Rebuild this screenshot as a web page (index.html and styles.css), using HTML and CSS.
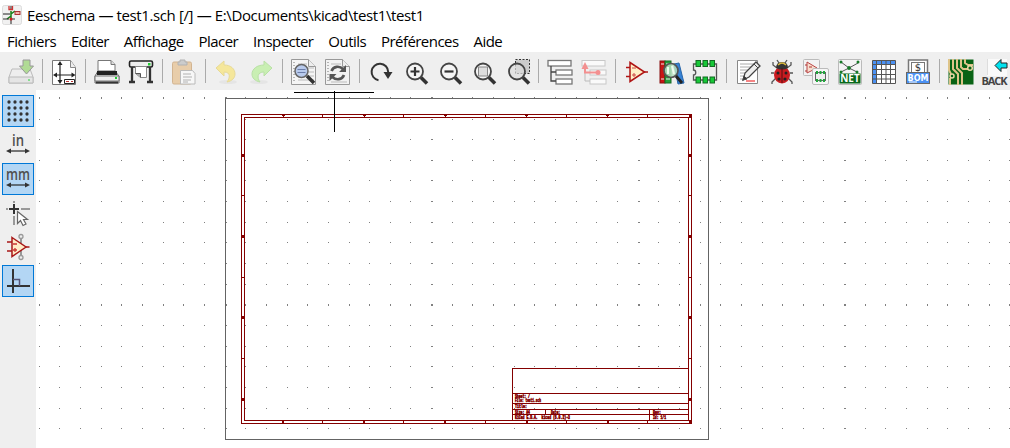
FILE: index.html
```html
<!DOCTYPE html>
<html lang="fr">
<head>
<meta charset="utf-8">
<title>Eeschema</title>
<link rel="stylesheet" href="styles.css">
</head>
<body>
<div class="app">
<header class="titlebar">
  <svg class="app-icon" viewBox="0 0 20 20"><rect x=".5" y=".5" width="19" height="19" rx="2" fill="#f1f1f1" stroke="#ddd"/><path d="M9 1v4M9 13v6M1 9h7" stroke="#222" fill="none"/><path d="M7 1v3.500h3.500V1" stroke="#c33" stroke-width="1.300" fill="none"/><path d="M9 6v7M9 9l4-3M9 11l-4 3" stroke="#167f16" stroke-width="1.500" fill="none"/><path d="M1 14h6M10 14h3" stroke="#333"/><rect x="13" y="6.500" width="5" height="3" fill="#f3b4ad" stroke="#a33"/><circle cx="9" cy="14" r="1.500" fill="#c22"/></svg>
  <span class="title">Eeschema — test1.sch [/] — E:\Documents\kicad\test1\test1</span>
</header>
<nav class="menubar"><span>Fichiers</span><span>Editer</span><span>Affichage</span><span>Placer</span><span>Inspecter</span><span>Outils</span><span>Préférences</span><span>Aide</span></nav>
<div class="toolbar">
  <div class="tool faded"><svg viewBox="0 0 26 26"><path d="M4 10h18l3 8v6H1v-6z" fill="#eee" stroke="#888"/><path d="M1 18h24v6H1z" fill="#ddd" stroke="#888"/><rect x="20" y="20" width="2" height="2" fill="#2c3"/><path d="M15 1h7v6h3.500l-7 8-7-8H15z" fill="#73c93c" stroke="#444"/></svg></div>
  <i class="sep"></i>
  <div class="tool"><svg viewBox="0 0 26 26"><path d="M1.500 1.500h18l5 7v17h-23z" fill="#fff" stroke="#777"/><path d="M19.500 1.500v7h5" fill="#eee" stroke="#888"/><path d="M9 4v19M4 16h18" stroke="#222" stroke-width="1.200"/><path d="M9 2l-2.500 4h5zM9 25l-2.500-4h5zM2 16l4-2.500v5zM24.500 16l-4-2.500v5z" fill="#222"/><path d="M13.500 20.500h10v4h-10z" fill="#fff" stroke="#222"/><path d="M15 22.500h3m2 0h2" stroke="#b33"/></svg></div>
  <i class="sep"></i>
  <div class="tool"><svg viewBox="0 0 26 26"><path d="M4 13V1.500h13l4 4V13" fill="#fff" stroke="#777"/><path d="M17 1.500v4h4" fill="#ddd" stroke="#777"/><path d="M4 12h17l4 5v7H1v-7z" fill="#ddd" stroke="#666"/><rect x="3" y="12" width="20" height="4" fill="#222"/><path d="M1 17h24v5H1z" fill="#eee" stroke="#777"/><path d="M2 23.500h22" stroke="#333" stroke-width="2"/><rect x="21" y="18" width="2" height="2" fill="#2c3"/></svg></div>
  <div class="tool"><svg viewBox="0 0 26 26"><rect x="1.500" y="2" width="23" height="6" rx="1.500" fill="#eee" stroke="#222" stroke-width="1.600"/><path d="M4 8v14m18-14v14M1 23h6m12 0h6" stroke="#333" stroke-width="2.300"/><path d="M7.500 7.500h11v11h-6l-5-4z" fill="#fff" stroke="#888"/><path d="M7.500 14.500h5v4" fill="#aaa" stroke="#555"/><rect x="20" y="4" width="2.500" height="2.500" fill="#2c3"/></svg></div>
  <i class="sep"></i>
  <div class="tool faded"><svg viewBox="0 0 26 26"><rect x="1.500" y="3" width="19" height="22" rx="1.500" fill="#e3ad68" stroke="#b77a35"/><path d="M7 6V3h2V1h5v2h2v3z" fill="#aaa" stroke="#777"/><path d="M9.500 11.500h12l2.500 3v10.500H9.500z" fill="#fff" stroke="#888"/><path d="M12 15h8m-8 3h9m-9 3h8m-8 2h5" stroke="#777"/></svg></div>
  <i class="sep"></i>
  <div class="tool faded"><svg viewBox="0 0 26 26"><ellipse cx="14" cy="23" rx="9" ry="2" fill="#ddd"/><path d="M2 9l8-7v4c7 0 11 4 11 9 0 4-3 7-8 8 3-4 4-10-3-10v4z" fill="#fbe04a" stroke="#e0c540"/></svg></div>
  <div class="tool faded"><svg viewBox="0 0 26 26"><ellipse cx="11" cy="23" rx="9" ry="2" fill="#ddd"/><path d="M24 9l-8-7v4c-7 0-12 4-12 9 0 4 3 7 8 8-3-4-3-10 4-10v4z" fill="#a4ef78" stroke="#84d35f"/></svg></div>
  <i class="sep"></i>
  <div class="tool"><svg viewBox="0 0 26 26"><path d="M.500 .500h17l7 7v18h-24z" fill="#f5f5f5" stroke="#999"/><path d="M17.500 .500v7h7" fill="#eee" stroke="#999"/><path d="M3 3v21" stroke="#777" stroke-dasharray="1 2"/><path d="M7 5h9M7 9h16M7 13h16M7 17h16M7 21h16" stroke="#bbb"/><circle cx="10.500" cy="12" r="6.500" fill="#b8caec" stroke="#666" stroke-width="1.500"/><path d="M6.500 10.500h8m-8 3h8" stroke="#6c7eaa"/><path d="M16 17l7 7" stroke="#333" stroke-width="3.500"/></svg></div>
  <div class="tool"><svg viewBox="0 0 26 26"><path d="M.500 .500h17l7 7v18h-24z" fill="#f2f2f2" stroke="#999"/><path d="M17.500 .500v7h7" fill="#eee" stroke="#999"/><path d="M3 3v21" stroke="#777" stroke-dasharray="1 2"/><path d="M6 5h10M6 23h16" stroke="#bbb"/><path d="M6.500 12c2-5 8-5.500 11.500-2M19 16c-2 5-8 5.500-11.500 2" fill="none" stroke="#555" stroke-width="2.700"/><path d="M21 6v7h-7zM4.500 22v-7h7z" fill="#555"/></svg></div>
  <i class="sep"></i>
  <div class="tool"><svg viewBox="0 0 26 26"><path d="M10.500 21.200A8.300 8.300 0 1 1 20.200 13" fill="none" stroke="#333" stroke-width="2"/><path d="M15.500 13h9l-4.500 7z" fill="#333"/></svg></div>
  <div class="tool"><svg viewBox="0 0 26 26"><circle cx="13" cy="12.500" r="8" fill="#f5f5f5" stroke="#444" stroke-width="1.800"/><path d="M13 8v9m-4.500-4.500h9" stroke="#333" stroke-width="2.200"/><path d="M19 18.500l6 6" stroke="#333" stroke-width="3.500"/></svg></div>
  <div class="tool"><svg viewBox="0 0 26 26"><circle cx="13" cy="12.500" r="8" fill="#f5f5f5" stroke="#444" stroke-width="1.800"/><path d="M8.500 12.500h9" stroke="#333" stroke-width="2.200"/><path d="M19 18.500l6 6" stroke="#333" stroke-width="3.500"/></svg></div>
  <div class="tool"><svg viewBox="0 0 26 26"><circle cx="13" cy="12.500" r="8" fill="#f5f5f5" stroke="#444" stroke-width="1.800"/><rect x="8.500" y="8" width="9" height="9" fill="#ddd" stroke="#888"/><path d="M19 18.500l6 6" stroke="#333" stroke-width="3.500"/></svg></div>
  <div class="tool"><svg viewBox="0 0 26 26"><rect x="11.500" y=".500" width="14" height="14" fill="#ccc" stroke="#333" stroke-dasharray="2 1.500"/><circle cx="13" cy="12.500" r="8" fill="#ddd" fill-opacity=".7" stroke="#444" stroke-width="1.800"/><path d="M19 18.500l6 6" stroke="#333" stroke-width="3.500"/></svg></div>
  <i class="sep"></i>
  <div class="tool"><svg viewBox="0 0 26 26"><g fill="#fff" stroke="#777" stroke-width="1.300"><rect x="1" y="1.500" width="23" height="5.500"/><rect x="9" y="11" width="16" height="5"/><rect x="9" y="20" width="16" height="5"/></g><path d="M4 7v15h5M4 13h5" fill="none" stroke="#444" stroke-width="1.300"/></svg></div>
  <div class="tool"><svg viewBox="0 0 26 26"><g fill="#fafafa" stroke="#c8c8c8"><rect x="1" y="1.500" width="23" height="5.500"/><rect x="9" y="11" width="16" height="5"/><rect x="9" y="20" width="16" height="5"/></g><path d="M4 13v9h5" fill="none" stroke="#bbb"/><path d="M4 8v5.500h13" fill="none" stroke="#f39090" stroke-width="2"/><path d="M.500 10L4 3l3.500 7z" fill="#f39090"/><circle cx="17" cy="13.500" r="2.500" fill="#f39090"/></svg></div>
  <i class="sep"></i>
  <div class="tool"><svg viewBox="0 0 26 26"><path d="M6 3.500l14.500 9.500L6 22.500z" fill="#fff0c7" stroke="#b01616" stroke-width="1.500"/><path d="M2 8.500h4M2 17.500h4M20 13h4" stroke="#b01616" stroke-width="1.700"/><path d="M8 9h4m-4 7h4m-2-2v4" stroke="#c44"/></svg></div>
  <div class="tool"><svg viewBox="0 0 26 26"><rect x="2" y="2" width="5" height="22" fill="#c91515" stroke="#811"/><rect x="7" y="2" width="6" height="22" fill="#24a03a" stroke="#176b24"/><path d="M16 5l5-1 5 20-6 1z" fill="#3683d7" stroke="#2765a8"/><path d="M3 5h3m2 0h4M3 20h3m2 0h4" stroke="#eee"/><circle cx="13" cy="11.500" r="7" fill="#b9e1c2" fill-opacity=".85" stroke="#555" stroke-width="1.700"/><path d="M10 8v7m4-8l2 8" stroke="#eefbee" stroke-width="2"/><path d="M18 17l6 7" stroke="#222" stroke-width="3"/></svg></div>
  <div class="tool"><svg viewBox="0 0 26 26"><path d="M1.500 5h23v16h-23v-5c3 0 3-5 0-5z" fill="#eee" stroke="#555" stroke-width="1.300"/><g fill="#17c837" stroke="#136b22"><rect x="4" y="1.500" width="4.500" height="6"/><rect x="11" y="1.500" width="4.500" height="6"/><rect x="18" y="1.500" width="4.500" height="6"/><rect x="4" y="18" width="4.500" height="6"/><rect x="11" y="18" width="4.500" height="6"/><rect x="18" y="18" width="4.500" height="6"/></g></svg></div>
  <i class="sep"></i>
  <div class="tool"><svg viewBox="0 0 26 26"><path d="M2.500 1.500h20v23h-20z" fill="#fff" stroke="#888"/><path d="M5 5h15M5 8h12M5 11h10M5 14h8M5 17h6M5 20h3" stroke="#aaa"/><path d="M11 22h9" stroke="#e33" stroke-width="1.200"/><path d="M8 21l2-7L21 3l4 4-11 11z" fill="#eee" stroke="#444" stroke-width="1.300"/><path d="M8 21l1-4 3 3zM19 5l4 4" fill="#333" stroke="#444"/></svg></div>
  <div class="tool"><svg viewBox="0 0 26 26"><path d="M8 9L4 6V3M18 9l4-3V3M5 14H2m19 0h3M7 19l-4 4v2M19 19l4 4v2M10 4L8 1m8 3l2-3" fill="none" stroke="#555" stroke-width="1.300"/><ellipse cx="13" cy="16" rx="8" ry="8.500" fill="#c91b20"/><path d="M7 9q0-6 6-6t6 6q-6 3-12 0z" fill="#333"/><path d="M9 6q4-4 8 0" fill="none" stroke="#d8b73d" stroke-width="1.500"/><path d="M13 9v15" stroke="#511"/><g fill="#222"><circle cx="9" cy="14" r="1.500"/><circle cx="17" cy="14" r="1.500"/><circle cx="10" cy="20" r="1.600"/><circle cx="16" cy="20" r="1.600"/></g></svg></div>
  <div class="tool"><svg viewBox="0 0 26 26"><rect x=".500" y=".500" width="16" height="16" rx="1" fill="#f3f3f3" stroke="#bbb"/><path d="M4 3l10 6-10 5z" fill="#f7ddcd" stroke="#b44"/><path d="M2 6h2m-2 6h2m2-4h3" stroke="#a33"/><rect x="9.500" y="9.500" width="16" height="16" rx="1.500" fill="#f6f6f6" stroke="#bbb"/><rect x="12.500" y="13.500" width="10" height="8" fill="#eee" stroke="#666"/><path d="M13 13.500h2m1.500 0h2m1.500 0h2M13 21.500h2m1.500 0h2m1.500 0h2" stroke="#21a83c" stroke-width="3"/></svg></div>
  <div class="tool"><svg viewBox="0 0 26 26"><rect x="1.500" y=".500" width="23" height="25" rx="1" fill="#f4f4f4" stroke="#bbb"/><path d="M4 3l8 6 9-5M4 13l8-4 8 4" stroke="#555" fill="none"/><g fill="#167a27"><circle cx="4" cy="3" r="1.500"/><circle cx="21" cy="3" r="1.500"/><circle cx="12" cy="9" r="1.900"/><circle cx="4" cy="13" r="1.500"/><circle cx="20" cy="13" r="1.500"/></g><rect x="2.500" y="14.500" width="21" height="10" fill="#09681b"/><text class="net" x="13" y="23" text-anchor="middle">NET</text></svg></div>
  <div class="tool"><svg viewBox="0 0 26 26"><path d="M1.500 1.500h23v23h-23z" fill="#fff"/><path d="M1.500 1.500h23v4h-19v19h-4z" fill="#4b91f3"/><path d="M1.500 1.500h23v23h-23zM5.500 1v24M10.500 1v24M15 1v24M19.500 1v24M1 5.500h24M1 10.500h24M1 15.500h24M1 20h24" fill="none" stroke="#555"/></svg></div>
  <div class="tool"><svg viewBox="0 0 26 26"><rect x="3.500" y="1" width="19" height="15" fill="#fff" stroke="#777" stroke-width="1.500"/><rect x="6.500" y="3.500" width="13" height="10" fill="#fff" stroke="#777"/><text class="dollar" x="13" y="12" text-anchor="middle">$</text><rect x="1.500" y="13.500" width="23" height="11" fill="#4b91f3" stroke="#666"/><text class="bom" x="13" y="21.500" text-anchor="middle">BOM</text><path d="M4 23h8" stroke="#fff"/></svg></div>
  <i class="sep"></i>
  <div class="tool"><svg viewBox="0 0 26 26"><path d="M.500.500h25v25H.500z" fill="#096315"/><path d="M1 0v11l2 4M5 0v10l5 5v11M9 0v9l5 5v12M13 0v8l2 2h5M17 0v4l3 2h5M2 26v-7" fill="none" stroke="#dec489" stroke-width="2"/><circle cx="22" cy="9" r="2.300" fill="#096315" stroke="#ead7a5" stroke-width="1.500"/><circle cx="4" cy="17" r="2" fill="#096315" stroke="#ead7a5" stroke-width="1.500"/></svg></div>
  <div class="tool"><svg viewBox="0 0 26 26"><path d="M5 0h20v17H5z" fill="#fafafa"/><path d="M5.500 0v16" stroke="#ddd"/><path d="M13 6.500l6-6v3.500h6v5h-6v3.500z" fill="#00e1ee" stroke="#222"/><text class="back" x="12.500" y="26" textLength="26" text-anchor="middle">BACK</text></svg></div>
</div>
<main class="workspace">
  <aside class="sidebar">
    <div class="side-tool active"><svg viewBox="0 0 32 32"><g stroke="#333" stroke-width="3.300" stroke-linecap="round" stroke-dasharray="0 6"><path d="M7 7h19M7 13h19M7 19h19M7 25h19"/></g></svg></div>
    <div class="side-tool"><svg viewBox="0 0 32 32"><text class="unit" x="16" y="17" textLength="12" lengthAdjust="spacingAndGlyphs" text-anchor="middle">in</text><path d="M7 22h18" stroke="#333" stroke-width="1.300"/><path d="M4 22l5-2.500v5zM28 22l-5-2.500v5z" fill="#333"/></svg></div>
    <div class="side-tool active"><svg viewBox="0 0 32 32"><text class="unit" x="16" y="17" textLength="24" lengthAdjust="spacingAndGlyphs" text-anchor="middle">mm</text><path d="M7 22h18" stroke="#333" stroke-width="1.300"/><path d="M4 22l5-2.500v5zM28 22l-5-2.500v5z" fill="#333"/></svg></div>
    <div class="side-tool"><svg viewBox="0 0 32 32"><path d="M4 12h2m13 0h9M12 4v2m0 13v9" stroke="#999" stroke-width="2"/><path d="M7 12h10M12 7v10" stroke="#333" stroke-width="2"/><path d="M15.500 14.500v12l3-3 2.500 5 3-1.500-2.500-4.500h4z" fill="#fff" stroke="#666" stroke-width="1.200"/></svg></div>
    <div class="side-tool"><svg viewBox="0 0 32 32"><path d="M19 7v19" stroke="#999" stroke-width="2"/><g fill="#eee" stroke="#999" stroke-width="1.300"><circle cx="19" cy="5.500" r="2"/><circle cx="19" cy="26.500" r="2"/></g><path d="M10 6.500l14 9.500-14 9.500z" fill="#ffecc8" stroke="#a91818" stroke-width="1.500"/><path d="M5 11h5m-5 9h5m14-4h3.500" stroke="#a91818" stroke-width="1.600"/><path d="M11 13h4m-4 6h4m-2-2v4" stroke="#c33" stroke-width="1.300"/></svg></div>
    <div class="side-tool active"><svg viewBox="0 0 32 32"><path d="M11 4v24M5 21h23" stroke="#333" stroke-width="2"/><path d="M11 14.500h6.500V21" fill="none" stroke="#557" stroke-width="1.500"/></svg></div>
  </aside>
  <svg class="sheet" viewBox="36 90 974 358" shape-rendering="crispEdges">
    <path class="grid-dots" id="grid"/>
    <rect class="page-edge" x="225.500" y="98.500" width="483" height="341"/>
    <g class="drawing">
      <rect x="241.500" y="114.500" width="450" height="309"/>
      <rect x="244.500" y="117.500" width="444" height="303"/>
      <path d="M283.500 114v3M322.500 114v3M364.500 114v3M403.500 114v3M445.500 114v3M485.500 114v3M526.500 114v3M566.500 114v3M607.500 114v3M647.500 114v3M283.500 420v3M322.500 420v3M364.500 420v3M403.500 420v3M445.500 420v3M485.500 420v3M526.500 420v3M566.500 420v3M607.500 420v3M647.500 420v3"/>
      <path d="M241 195.500h3M241 277.500h3M241 358.500h3M688 195.500h3M688 277.500h3M688 358.500h3"/>
      <path d="M512.500 420V368.500H688M512.500 393.500H688M512.500 403.500H688M512.500 409.500H688M512.500 414.500H688M545.500 409v5M649.500 409v11"/>
    </g>
    <g class="marks">
      <path d="M282 114h3v2h-3zM363 114h3v2h-3zM444 114h3v2h-3zM525 114h3v2h-3zM606 114h3v2h-3zM689 114h3v4h-3z"/>
      <path d="M282 421h2v2h-2zM363 421h2v2h-2zM444 421h2v2h-2zM526 421h2v2h-2zM607 421h2v2h-2zM689 420h3v3h-3z"/>
      <path d="M241 154h3v3h-3zM241 235h3v3h-3zM241 316h3v3h-3zM241 398h3v3h-3zM689 154h3v3h-3zM689 235h3v3h-3zM689 316h3v3h-3zM689 398h3v3h-3z"/>
    </g>
    <g class="block-text">
      <text x="515" y="397.500" textLength="15" lengthAdjust="spacingAndGlyphs">Sheet: /</text><text x="515" y="402" textLength="26" lengthAdjust="spacingAndGlyphs">File: test1.sch</text>
      <text x="515" y="408" textLength="12" lengthAdjust="spacingAndGlyphs">Title:</text><text x="515" y="414" textLength="15" lengthAdjust="spacingAndGlyphs">Size: A4</text><text x="551" y="414" textLength="9" lengthAdjust="spacingAndGlyphs">Date:</text><text x="653" y="414" textLength="8" lengthAdjust="spacingAndGlyphs">Rev:</text>
      <text x="515" y="419" textLength="55" lengthAdjust="spacingAndGlyphs" xml:space="preserve">KiCad E.D.A.  kicad (5.0.2)-3</text><text x="653" y="419" textLength="13" lengthAdjust="spacingAndGlyphs">Id: 1/1</text>
    </g>
    <path class="cursor" d="M294 92.500h80M334.500 91v41"/>
  </svg>
</main>
</div>
<script src="grid.js"></script>
</body>
</html>
```
FILE: styles.css
```css
* { box-sizing: border-box; }
body { margin: 0; background: #fff; font-family: "Open Sans", "Noto Sans", sans-serif; color: #000; }
.app { display: flex; flex-direction: column; width: 1010px; height: 448px; overflow: hidden; }
.titlebar { display: flex; align-items: center; gap: 5px; height: 30px; padding-left: 2px; font-size: 15px; }
.app-icon { width: 20px; height: 20px; }
.title { white-space: nowrap; line-height: 30px; letter-spacing: -.38px; }
.menubar { display: flex; gap: 14.900px; height: 22px; padding-left: 7px; font-size: 15px; line-height: 23px; letter-spacing: -.54px; white-space: nowrap; }
.toolbar { display: flex; align-items: center; height: 38px; padding: 0 0 0 4px; background: #efefef; flex: none; }
.tool { display: flex; justify-content: center; align-items: center; flex: 0 0 34px; height: 38px; padding-top: 2px; }
.tool svg { width: 26px; height: 26px; overflow: visible; }
.faded { opacity: .5; }
.sep { flex: 0 0 9px; height: 24px; background: linear-gradient(#aaa, #aaa) 4px 0 / 1px 100% no-repeat; }
.workspace { display: flex; flex: 1; min-height: 0; }
.sidebar { display: flex; flex-direction: column; gap: 2px; flex: 0 0 36px; padding: 5px 2px 0; background: #efefef; }
.side-tool { position: relative; flex: 0 0 32px; height: 32px; }
.side-tool svg { display: block; width: 32px; height: 32px; overflow: visible; }
.active { background: #b3d6f4; box-shadow: inset 0 0 0 1px #0078d7; }
.sheet { display: block; width: 974px; height: 358px; background: #fff; }
.grid-dots { fill: #808080; }
.page-edge { fill: none; stroke: #646464; }
.drawing { fill: none; stroke: #840000; }
.marks { fill: #840000; }
.cursor { stroke: #000; fill: none; }
.block-text { fill: #840000; stroke: #840000; stroke-width: .6px; font: bold 5px "Liberation Mono", monospace; }
.net { font: bold 10px "Open Sans", sans-serif; fill: #fff; }
.dollar { font: 10px "DejaVu Sans", sans-serif; fill: #333; }
.bom { font: bold 8px "DejaVu Sans", sans-serif; fill: #fff; }
.back { font: bold 11px "Open Sans", sans-serif; fill: #444; }
.unit { font: 600 17px "Open Sans", sans-serif; fill: #505050; }
```
FILE: grid.js
```js
const parts = [];
for (let row = 0; row < 17; row++) {
  const y = Math.floor(98.38 + row * 20.65);
  const h = row % 10 === 0 ? 2 : 1;
  const top = row === 0 ? y - 1 : y;
  for (let col = 0; col < 48; col++) {
    const x = Math.floor(39.28 + col * 20.65);
    const w = col % 10 === 9 ? 2 : 1;
    parts.push(`M${x} ${top}h${w}v${h}h${-w}z`);
  }
}
document.getElementById("grid").setAttribute("d", parts.join(""));
```
